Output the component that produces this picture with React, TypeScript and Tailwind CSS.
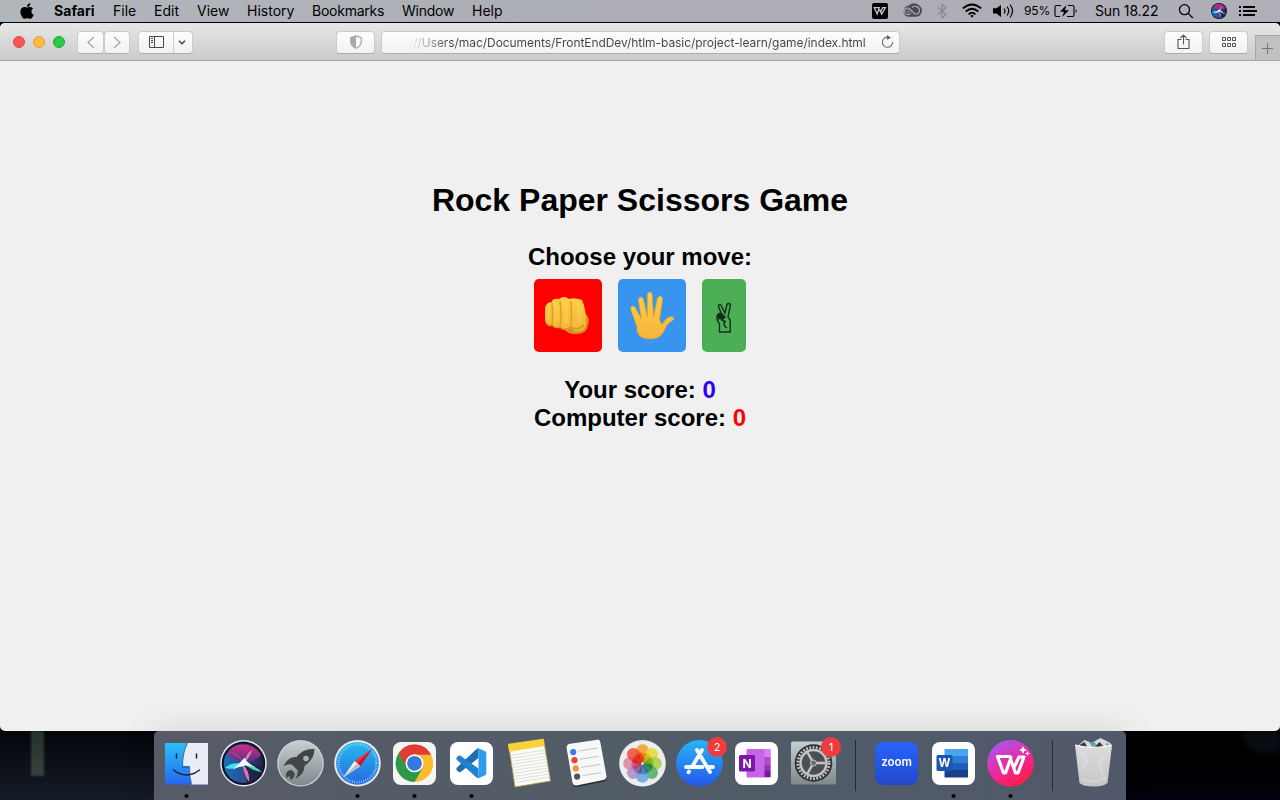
import React from "react";
import { FaApple } from "react-icons/fa";

const petals = [
  ["#f59a23", 0], ["#e8d82f", 45], ["#a8cf45", 90], ["#4fae62", 135],
  ["#5fa9dd", 180], ["#a58bc9", 225], ["#dd7fa6", 270], ["#ee4b3c", 315],
] as const;

function Cell({ w, className = "", children }: { w: string; className?: string; children?: React.ReactNode }) {
  return <div className={`flex h-full shrink-0 items-center whitespace-nowrap ${w} ${className}`}>{children}</div>;
}

function SiriOrb({ r }: { r: number }) {
  return (
    <g transform={`scale(${r / 20})`}>
      <circle r="20" fill="#15122c" />
      <circle r="18" fill="url(#siriBase)" />
      <path d="M-15-9C-8-20 8-20 16-8C13-3 6-2 0 0C-6-3-12-5-15-9Z" fill="url(#siriPink)" />
      <path d="M0 0C8-1 15 2 18 5C14 16 6 19 3 17C3 10 2 5 0 0Z" fill="#16233f" opacity=".85" />
      <path d="M0 1C-6 5-13 6-17 4C-12 0-6-1 0 1Z" fill="#45dff0" />
      <path d="M0 0C6 0 12 4 17 8C10 7 4 4 0 0Z" fill="#50d5b8" />
      <path d="M-1 1C0 7 2 13 5 17C6 10 3 4-1 1Z" fill="#ee6fae" />
      <path d="M0 0C-4-5-8-8-13-10C-7-11-2-7 0 0Z" fill="#a04bb0" opacity=".55" />
      <path d="M0 0C2-7 5-11 8-12C6-7 4-3 0 0Z" fill="#f4a4d7" opacity=".7" />
      <path d="M-10 6C-6 2-3-1 1-5C2-2 6 1 11 3.5C6 3 2 1-1 3C-4 3-6 4-10 6Z" fill="#e9feff" />
    </g>
  );
}

function MenuBar() {
  return (
    <div className="flex h-[22px] shrink-0 bg-linear-to-r from-[#b2b7bc] via-[#abacb5] to-[#afafb8] pl-5 text-[14px] font-normal text-black">
      <Cell w="w-[34px]" className="pb-px"><FaApple className="h-[18px] w-[14px]" /></Cell>
      <Cell w="w-[59px]" className="pb-[2px] font-bold tracking-[0.05px]">Safari</Cell>
      <Cell w="w-[41px]" className="pb-[2px]">File</Cell>
      <Cell w="w-[43px]" className="pb-[2px]">Edit</Cell>
      <Cell w="w-[50px]" className="pb-[2px]">View</Cell>
      <Cell w="w-[65px]" className="pb-[2px]">History</Cell>
      <Cell w="w-[90px]" className="pb-[2px] tracking-[-0.25px]">Bookmarks</Cell>
      <Cell w="w-[70px]" className="pb-[2px] tracking-[-0.25px]">Window</Cell>
      <Cell w="w-[400px]" className="pb-[2px]">Help</Cell>
      <Cell w="w-[30px]">
        <svg width="16" height="16" viewBox="0 0 16 16"><rect width="16" height="16" rx="2" /><path d="M2.2 4.7H7.2L5.2 11ZM7.6 6.5 9.6 11 13.4 4.7H10.6L8.8 8.5" fill="none" stroke="#c4c4ce" strokeWidth="1.3" /></svg>
      </Cell>
      <Cell w="w-[34px]" className="pb-px">
        <svg width="20" height="15" viewBox="0 0 20 15" fill="none"><path d="M6 13.8h7.7A6.2 6.2 0 0 0 17.3 2.6A6.9 6.9 0 0 0 7 2.4A5.8 5.8 0 0 0 6 13.8Z" fill="#4b4c53" /><path d="M8.5 10.7C5 12.6 2.2 10.8 2.2 8.1C2.2 5 6 3.9 8.2 6.2L12 10.2C14.5 12 17.5 10.6 17.5 7.4C17.5 3.7 12.8 2 10 4.5" stroke="#aeb0b9" strokeWidth="1.1" /><path d="M8 8.7C6.8 10 4.5 9.7 4.5 8C4.5 6.5 6.5 6 8 7.6L10.2 10" stroke="#aeb0b9" strokeWidth=".7" /></svg>
      </Cell>
      <Cell w="w-[26px]"><svg width="13" height="16" viewBox="0 0 13 16" fill="none" stroke="#85868f" strokeWidth="1.1"><path d="m2 4.5 8 7L6 15V1l4 3.5-8 7" /></svg></Cell>
      <Cell w="w-[31px]"><svg width="20" height="16" viewBox="0 0 20 16" fill="none" stroke="black" strokeWidth="1.9"><path d="M.8 5.4Q10-2.6 19.2 5.4M3.7 8.5Q10 2.8 16.3 8.5M6.6 11.4Q10 8.2 13.4 11.4" /><path d="M8.2 12.8Q10 11.4 11.8 12.8L10 14.8Z" fill="black" stroke="none" /></svg></Cell>
      <Cell w="w-[31px]"><svg width="21" height="16" viewBox="0 0 21 16" fill="none" stroke="black" strokeWidth="1.2"><path d="M0 5.2h3.5L8 2v12l-4.5-3.4H0Z" fill="black" stroke="none" /><path d="M11 5.5q2 2.5 0 5M14 3.5q3.5 4.5 0 9M17 1.5q5 6.5 0 13" /></svg></Cell>
      <Cell w="w-[30px]" className="text-[12px] tracking-[-0.1px]">95%</Cell>
      <Cell w="w-[41px]"><svg width="24" height="14" viewBox="0 0 24 14" fill="none" stroke="black" strokeWidth="1.1"><path d="M7 1.5H2.5Q1 1.5 1 3v8q0 1.5 1.5 1.5H6M14 1.5h4.5Q20 1.5 20 3v8q0 1.5-1.5 1.5H13" /><path d="M12.5 1 6 7.7h4L8.2 13 15 6.2h-4Z" fill="black" stroke="none" /><path d="M21.7 5q2.2 2 0 4Z" fill="black" stroke="none" /></svg></Cell>
      <Cell w="w-[83px]" className="pb-[2px] tracking-[-0.15px]">Sun 18.22</Cell>
      <Cell w="w-[33px]"><svg width="16" height="16" viewBox="0 0 16 16" fill="none" stroke="black" strokeWidth="1.3"><circle cx="6.5" cy="6.7" r="5" /><path d="m10.2 10.4 4.6 4.6" /></svg></Cell>
      <Cell w="w-[28px]"><svg width="16" height="16" viewBox="-8 -8 16 16"><SiriOrb r={8} /></svg></Cell>
      <Cell w="w-[18px]"><svg width="18" height="12" viewBox="0 0 18 12"><path d="M0 1h2v2H0ZM4 1h12v2H4ZM0 5h2v2H0ZM4 5h14v2H4ZM0 9h2v2H0ZM4 9h12v2H4Z" /></svg></Cell>
    </div>
  );
}

function ToolButton({ w, children, className = "" }: { w: string; children: React.ReactNode; className?: string }) {
  return <div className={`mt-px flex h-[23px] shrink-0 items-center justify-center rounded-[4px] border border-[#cbcbcb] border-b-[#adadad] bg-linear-to-b from-[#fdfdfd] to-[#f2f2f2] ${w} ${className}`}>{children}</div>;
}

function Toolbar() {
  return (
    <div className="flex h-[38px] shrink-0 items-center border-b border-[#a6a6a6] bg-linear-to-b from-[#e7e7e7] to-[#cbcbcb] pl-[13px]">
      <div className="flex w-[64px] shrink-0 gap-2">
        <i className="size-3 rounded-full border border-[#df4744] bg-[#fc5753]" />
        <i className="size-3 rounded-full border border-[#de9f34] bg-[#fdbc40]" />
        <i className="size-3 rounded-full border border-[#14ae35] bg-[#28ca48]" />
      </div>
      <ToolButton w="w-[27px]"><svg width="8" height="13" viewBox="0 0 8 13" fill="none" stroke="#aaa" strokeWidth="1.4"><path d="M7 1 1 6.5 7 12" /></svg></ToolButton>
      <ToolButton w="w-[26px]" className="mr-2"><svg width="8" height="13" viewBox="0 0 8 13" fill="none" stroke="#aaa" strokeWidth="1.4"><path d="M1 1 7 6.5 1 12" /></svg></ToolButton>
      <ToolButton w="w-[55px]" className="mr-[143px]">
        <div className="flex h-full w-[35px] items-center justify-center border-r border-[#cecece]"><svg width="16" height="12" viewBox="0 0 16 12" fill="none" stroke="#484848"><path d="M1.5.5h14v11h-14ZM6.5.5v11" /><path d="M3 2.5h2M3 4.5h2M3 6.5h2" /></svg></div>
        <div className="flex flex-1 justify-center pr-[3px]"><svg width="8" height="5" viewBox="0 0 8 5" fill="none" stroke="#444" strokeWidth="1.5"><path d="m1 .7 3 3 3-3" /></svg></div>
      </ToolButton>
      <ToolButton w="w-[39px]" className="mr-[6px]"><svg width="12" height="14" viewBox="0 0 12 14"><path d="M6 .7Q8.3 2 11.3 2.5V7Q11 11 6 13.3Q1 11 .7 7V2.5Q3.7 2 6 .7Z" fill="#f8f8f8" stroke="#a5a5a5" strokeWidth="1.2" /><path d="M6 1Q3.7 2.2 1 2.6V7Q1.3 11 6 13Z" fill="#aaa" /></svg></ToolButton>
      <ToolButton w="w-[519px]" className="mr-[264px]">
        <div className="flex w-full items-center justify-between pr-[5px] pl-[27px]">
          <span className="whitespace-nowrap bg-linear-to-r from-transparent via-[#444] via-[9%] to-[#444] bg-clip-text pt-px text-[12px] leading-4 tracking-[-0.06px] text-transparent">///Users/mac/Documents/FrontEndDev/htlm-basic/project-learn/game/index.html</span>
          <svg width="13" height="14" viewBox="0 0 13 14" fill="none" stroke="#656565" strokeWidth="1.1"><path d="M7.5 2.2A5.1 5.1 0 1 0 11.6 7" /><path d="m6 0 4 2.7L6 5Z" fill="#656565" stroke="none" /></svg>
        </div>
      </ToolButton>
      <ToolButton w="w-[39px]" className="mr-[6px]"><svg width="13" height="16" viewBox="0 0 13 16" fill="none" stroke="#555" strokeWidth="1.1"><path d="M4.5 5.5H1v9h11v-9H8.5M6.5 10.5v-9M3.5 4l3-3 3 3" /></svg></ToolButton>
      <ToolButton w="w-[39px]" className="mr-[7px]"><svg width="16" height="11" viewBox="-1 0 16 11" fill="none" stroke="#555"><path d="M.5.5h3v3h-3ZM5.5.5h3v3h-3ZM10.5.5h3v3h-3ZM.5 6.5h3v3h-3ZM5.5 6.5h3v3h-3ZM10.5 6.5h3v3h-3Z" /></svg></ToolButton>
      <div className="flex h-[25px] flex-1 items-center justify-center self-end border-t border-l border-[#a6a6a6] bg-[#c1c1c1]"><svg width="12" height="12" viewBox="0 0 12 12" stroke="#777"><path d="M0 6.5h11M5.5 1v11" /></svg></div>
    </div>
  );
}

function Fist() {
  return (
    <svg className="-ml-[2px]" width="46" height="40" viewBox="0 0 46 40">
      <path d="M21 33Q22 38 32 38Q43 38 44 29Q46 23 43 19L38 16L21 30Z" fill="#d3921f" />
      <path d="M30 34Q40 36 41 27" fill="none" stroke="#e9b33c" strokeWidth="2.5" />
      <path d="M1 14Q1 6 8 6Q8 2 15 3Q20-1 25 3Q31 1 38 4Q42 13 42 25Q41 33 34 33Q29 34 27 32Q20 36 16 32Q10 33 8 29Q2 31 1 24Z" fill="url(#skin)" />
      <path d="M8 7Q9 18 8 29M16 5Q18 18 16 31M27 5Q28 17 27 31" fill="none" stroke="#e29c2b" strokeWidth="1.4" />
      <path d="M3 28Q6 31 8 29Q11 33 16 31Q20 35 27 31Q34 35 40 29" fill="none" stroke="#d88f25" strokeWidth="1.2" />
      <path d="M4.5 11Q3.5 16 4.5 23M12 8Q13 16 12 25M21 6Q23 15 22 26M34 7Q36 15 35 26" fill="none" stroke="#ffdc62" strokeWidth="3.5" strokeLinecap="round" opacity=".3" />
    </svg>
  );
}

function Hand() {
  return (
    <svg className="mt-px" width="46" height="50" viewBox="0 0 46 50">
      <path d="M8 36L1.8 18.5Q1.3 15 4 15Q6 15 7.5 19L12.5 28L9.5 10Q9 6 12 6Q14 6 14.8 10L18.3 26L18.3 4Q18.5 1 20.8 1Q23 1 23.2 4L24.5 26L28.2 8Q29 5 31.5 5Q34.2 6 33.3 10L30.7 28Q31.5 34 34 32.5Q36 28 40 26Q44 25 45 27Q45 29.5 41 31Q38 33 35.5 39Q32 48 21 48Q10 48 8 40Z" fill="url(#skin)" stroke="#dea02e" strokeWidth=".7" />
    </svg>
  );
}

function Victory() {
  return (
    <svg className="mt-[5px]" width="16" height="32" viewBox="0 0 16 32" fill="none" stroke="#12301a" strokeWidth="1.4">
      <path d="M3.5 30V22L1 17.5V14L3 11.5L5.5 12L2.5 4.5Q2.5 1.5 4.8 3L9 11L11 2.5Q12.5.5 14.5 2.5L12 15L14.2 18V30Z" />
      <path d="M1 15Q3 10 6 12L9 15 6 18 10 20M2 18Q4 13 8 17M8 19 8.5 24L11 26" strokeWidth="1.5" />
      <path d="M3 12 6 13 8 15 5 17 2 15Z" fill="#12301a" />
    </svg>
  );
}

function DockIcon({ dot, children }: { dot?: boolean; children: React.ReactNode }) {
  return (
    <svg className="shrink-0" width="57" height="69" viewBox="-28.5 -32 57 69">
      {children}
      {dot && <circle cy="33" r="2.1" fill="#050507" />}
    </svg>
  );
}

const Tile = ({ fill = "white" }: { fill?: string }) => <rect x="-21.5" y="-21" width="43" height="43" rx="8" fill={fill} />;

function Badge({ n }: { n: number }) {
  return <g><circle cx="17.5" cy="-16" r="10" fill="#f23b3c" /><text x="17.5" y="-12" textAnchor="middle" fill="white" fontSize="11">{n}</text></g>;
}

function Divider() {
  return <div className="flex w-[26px] shrink-0 justify-center pt-[9px] pl-px"><div className="h-[51px] w-px bg-[#242a3a]" /></div>;
}

function Dock() {
  return (
    <div className="relative z-10 flex h-[69px] w-[972px] rounded-t-[5px] bg-linear-to-r from-[#575b67] via-[#515c67] via-50% to-[#50586a] pl-[3.5px] shadow-[0_0_34px_rgba(0,0,0,0.12)]">
      <DockIcon dot>
        <rect x="-21.5" y="-20" width="43" height="41.5" rx="1" fill="url(#finder)" />
        <path d="M1-20H21.5V21.5H5Q3 14 3 8V3H-4Q-4-10 1-20Z" fill="#e9edf6" />
        <path d="M1-20Q-4-10-4 4H3Q3 14 5 21" fill="none" stroke="#17314e" strokeWidth=".6" />
        <path d="M-10-9V-5M10-9V-5" stroke="#14253c" strokeWidth="1.5" strokeLinecap="round" /><path d="M-13 7Q0 17 13 7" fill="none" stroke="#14253c" strokeWidth="1.5" strokeLinecap="round" />
      </DockIcon>
      <DockIcon><circle cy=".3" r="23.3" fill="#e7e8ed" /><g transform="translate(0 .3)"><SiriOrb r={21.8} /></g></DockIcon>
      <DockIcon>
        <circle cy=".3" r="23.3" fill="#c9d1d5" /><circle cy=".3" r="22" fill="url(#silver)" />
        <path d="M14-14Q3-15-4-6Q-12-7-17 3Q-11 0-8 2L-3 7Q-2 11-5 16Q4 11 4 3Q14-4 14-14Z" fill="#414548" /><path d="M-9 7Q-16 7-14 15L-11 13-10 17Q-5 14-6 10Z" fill="#414548" /><circle cx="5.5" cy="-4.5" r="2.8" fill="#a9b3b5" />
      </DockIcon>
      <DockIcon dot>
        <circle cy=".3" r="23.3" fill="#ececef" /><circle cy=".3" r="21.4" fill="url(#safari)" />
        <circle cy=".3" r="19" fill="none" stroke="#a7ddfa" strokeWidth="2.6" strokeDasharray=".7 1.6" />
        <path d="M14.5-14-3-2 3 3Z" fill="#f2353a" /><path d="M-14.5 14.5-3-2 3 3Z" fill="#f0f1f2" /><path d="M-14.5 14.5 0 0 3 3Z" fill="#babdc1" /><path d="M14.5-14 3 3 0 0Z" fill="#bc1d2d" />
      </DockIcon>
      <DockIcon dot>
        <Tile fill="#f5f5f5" /><g transform="translate(0 .3)"><circle r="18.7" fill="#f8bc2c" /><path d="M0-8.5H16.6A18.7 18.7 0 0 0-15.9-10L-8 5Z" fill="#df3c32" /><path d="M-15.9-10A18.7 18.7 0 0 0 0 18.7L8 5-7.5 4.5Z" fill="#2b9b4b" /><circle r="9" fill="white" /><circle r="7.4" fill="#3878e5" /></g>
      </DockIcon>
      <DockIcon dot>
        <Tile /><path d="M7-14.5V-5L-11 9Q-12.5 9.7-14 8L-15 6.5Q-15.5 5.5-14.5 4.5L5-14Z" fill="#1f6db2" /><path d="M7 15V5.5L-11-7.2Q-12.5-8-14-6.5L-15-5Q-15.5-4-14.5-3L5 14.5Z" fill="#2380cf" /><path d="M5-14 7-14.8 14-11.5Q14.8-11 14.8-10V10.5Q14.8 11.5 14 12L7 15.2 5 14.5Q7 15 7 12V-11.5Q7-14 5-14Z" fill="#309bed" />
      </DockIcon>
      <DockIcon>
        <path d="M-20-19 15-24 22 18-13.5 24Z" fill="#fbfbf8" stroke="#bd9930" strokeWidth=".8" /><path d="M-20.5-18.7 15-24 16-17-19.5-11.3Z" fill="#fbd13b" />
        {[0, 1, 2, 3, 4, 5, 6, 7, 8, 9].map((i) => <path key={i} d={`M${-18.5 + i * .5} ${-7.5 + i * 3}L${17 + i * .5} ${-13 + i * 3}`} stroke="#c9c9c9" strokeWidth=".6" />)}
      </DockIcon>
      <DockIcon>
        <path d="M-17-18 12-22Q14-23 15-19L21 15Q21 18 18 18.5L-9 24Q-12 24-13 21L-19-14Q-19-17-17-18Z" fill="#25282c" /><path d="M-17-19 12-23.3Q14-24 15-20L21 13Q21 16 18 17L-9 22.5Q-12 23-13 20L-19-15Q-19-18-17-19Z" fill="#f8f8f8" />
        {["#397af4", "#ef4035", "#f09831", "#51565e"].map((c, i) => <g key={c}><circle cx={-12.3 + i * 1.3} cy={-11 + i * 8.2} r="3.1" fill={c} /><path d={`M${-7 + i * 1.3} ${-12 + i * 8.2}l19-3`} stroke="#b5b5b5" strokeWidth=".8" /></g>)}
      </DockIcon>
      <DockIcon>
        <circle cy=".3" r="23.3" fill="#ededee" />
        <g transform="translate(0 .5)">{petals.map(([c, a]) => <rect key={c} x="-6.2" y="-19.3" width="12.4" height="19" rx="6.2" fill={c} opacity=".85" transform={`rotate(${a})`} />)}{petals.map(([c, a]) => <path key={c} d="M0 0-5.7-8-2-11.2 4.3-10Z" fill={c} transform={`rotate(${a})`} className="mix-blend-multiply" opacity=".6" />)}<circle r="1.2" fill="white" /></g>
      </DockIcon>
      <DockIcon>
        <circle cy=".3" r="23.3" fill="url(#appstore)" /><g fill="none" stroke="#f7fbff" strokeWidth="3.8" strokeLinecap="round"><path d="M-2.5-13 10.5 9M2.5-13-7.5 4M-13.5 4H3M8.5 4H13.5M-10.5 8.5-11 9.3" /></g><Badge n={2} />
      </DockIcon>
      <DockIcon>
        <Tile /><rect x="-10" y="-14" width="24" height="28.5" rx="1" fill="#ca64e6" /><path d="M8-14H14V-6H8Z" fill="#d883ed" /><path d="M8-6H14V2H8Z" fill="#af4bcf" /><path d="M8 2H14V8H8Z" fill="#9533b4" /><path d="M8 8H14V14H8Z" fill="#7719a0" />
        <rect x="-17.5" y="-8" width="16" height="16.5" rx="1.5" fill="#7719aa" /><text x="-9.5" y="4.5" textAnchor="middle" fill="white" fontSize="12" fontWeight="700">N</text>
      </DockIcon>
      <DockIcon>
        <rect x="-22.5" y="-21.5" width="45" height="43" rx="2" fill="url(#silver)" /><circle r="18.8" fill="#303336" /><circle r="15.7" fill="none" stroke="#c6c7c7" strokeWidth="2.6" strokeDasharray="1.8 1.5" /><circle r="13" fill="#4c4f52" stroke="#c1c3c3" strokeWidth="2.6" /><path d="M0 0H12M0 0-6-10.4M0 0-6 10.4" stroke="#c5c6c6" strokeWidth="2.4" /><circle r="3" fill="#686b6d" stroke="#c5c6c6" /><Badge n={1} />
      </DockIcon>
      <Divider />
      <DockIcon><Tile fill="url(#zoomBlue)" /><text y="3.3" textAnchor="middle" fontSize="11.6" fontWeight="600" fill="white" letterSpacing="-.1">zoom</text></DockIcon>
      <DockIcon dot>
        <Tile /><path d="M-9-14H14.5V-7H-9Z" fill="#46a7ec" /><path d="M-9-7H14.5V0H-9Z" fill="#2f7fd6" /><path d="M-9 0H14.5V7H-9Z" fill="#215dbc" /><path d="M-9 7H14.5V14.5H-9Z" fill="#183f8b" /><rect x="-17" y="-8" width="16" height="16" rx="1.5" fill="#1c54b3" /><text x="-9" y="4.4" fill="white" textAnchor="middle" fontSize="11.5" fontWeight="700">W</text>
      </DockIcon>
      <DockIcon dot>
        <circle cy=".3" r="23.3" fill="url(#wps)" /><g fill="none" stroke="white" strokeWidth="3.2" strokeLinejoin="round"><path d="M-13-6.5H-1.5Q1-6.5 0-4L-5 10H-7Z" /><path d="M0-4 5 10H7.5L13.5-6H8.5L3.5 4.5" /></g><path d="m12.5-17 1.2 2.8 2.8 1.2-2.8 1.2-1.2 2.8-1.2-2.8L8.500-13l2.800-1.200ZM17-12l.7 1.700 1.800.8-1.800.8L17-7l-.7-1.700-1.800-.8 1.800-.8Z" fill="white" />
      </DockIcon>
      <Divider />
      <DockIcon>
        <path d="M-17-16-9-23-2-20 7-25 17-20 18-13Z" fill="#d6dadd" /><path d="m-14-18 5-3 4 7-8 1ZM1-16l5-5 5 5-5 4Z" fill="#303943" /><path d="m-4-20 5-1 2 3-4 2ZM12-19l3-1v4Z" fill="#58a7b4" /><path d="m8-18 3 1-3 3ZM-9-17l3 2-4 1Z" fill="#e66445" />
        <path d="M-18.500-18Q0-13 18.500-18L14 20Q10 23.500 0 23.500T-14 20Z" fill="url(#trash)" /><path d="M-18.500-18Q0-13 18.500-18" fill="none" stroke="#fafafa" strokeWidth="1.2" /><path d="m-12-11 5 10-5 8M12-8 6 0l4 16M-12 16Q0 21 12 15" fill="none" stroke="white" strokeWidth="2" opacity=".2" />
      </DockIcon>
    </div>
  );
}

function Gradients() {
  const defs: [string, string, string][] = [["finder", "#28c2f8", "#2866f1"], ["silver", "#c6cfd2", "#7e898c"], ["safari", "#25bced", "#2568df"], ["appstore", "#27b5f8", "#2457e9"], ["zoomBlue", "#2864fb", "#2247cb"], ["trash", "#dcdcdc", "#c6c6c6"], ["siriPink", "#d52b8b", "#513078"], ["skin", "#ffcf47", "#f5b539"]];
  return (
    <svg className="absolute size-0" aria-hidden="true"><defs>
      {defs.map(([id, a, b]) => <linearGradient key={id} id={id} x2="0" y2="1"><stop stopColor={a} /><stop offset="1" stopColor={b} /></linearGradient>)}
      <linearGradient id="siriBase" x1="0" y1=".6" x2="1" y2=".5"><stop stopColor="#1a70b8" /><stop offset=".55" stopColor="#2b4a8c" /><stop offset="1" stopColor="#28204e" /></linearGradient>
      <linearGradient id="wps" x1=".2" y1="0" x2=".75" y2="1"><stop stopColor="#a35af5" /><stop offset=".55" stopColor="#ee279b" /><stop offset="1" stopColor="#ff1c38" /></linearGradient>
    </defs></svg>
  );
}

export default function App() {
  return (
    <div className="flex h-[800px] w-[1280px] flex-col overflow-hidden bg-black font-['Inter',sans-serif]">
      <Gradients />
      <MenuBar />
      <div className="mt-px flex h-[708px] shrink-0 flex-col overflow-hidden rounded-[5px] bg-[#f0f0f0]">
        <Toolbar />
        <main className="flex flex-1 flex-col items-center pt-[120px] font-['Liberation_Sans',sans-serif] font-bold text-black">
          <h1 className="text-[32px] leading-[38px]">Rock Paper Scissors Game</h1>
          <h2 className="mt-[24px] text-[24px] leading-[28px]">Choose your move:</h2>
          <div className="mt-[8px] flex gap-4">
            <button aria-label="Rock" className="flex h-[73px] w-[68px] items-center justify-center rounded-[5px] bg-[#ff0000]"><Fist /></button>
            <button aria-label="Paper" className="flex h-[73px] w-[68px] items-center justify-center rounded-[5px] bg-[#3795f0]"><Hand /></button>
            <button aria-label="Scissors" className="flex h-[73px] w-[44px] items-center justify-center rounded-[5px] bg-[#4caf56]"><Victory /></button>
          </div>
          <div className="mt-[24px] text-center text-[24px] leading-[28px]">
            <p>Your score: <span className="text-[#3300f0]">0</span></p>
            <p>Computer score: <span className="text-[#ff0000]">0</span></p>
          </div>
        </main>
      </div>
      <div className="flex h-[69px] shrink-0 bg-linear-to-b from-[#050609] to-[#151b28]">
        <div className="w-[154px] shrink-0 overflow-hidden pl-[31px]"><div className="h-[45px] w-[13px] bg-linear-to-b from-[#27312f] to-[#36423e] blur-[1px]" /></div>
        <Dock />
        <div className="flex flex-1 justify-end overflow-hidden bg-linear-to-b from-black to-[#02020e]"><div className="h-[22px] w-[38px] rounded-bl-full bg-[#090d13] blur-[3px]" /></div>
      </div>
    </div>
  );
}
